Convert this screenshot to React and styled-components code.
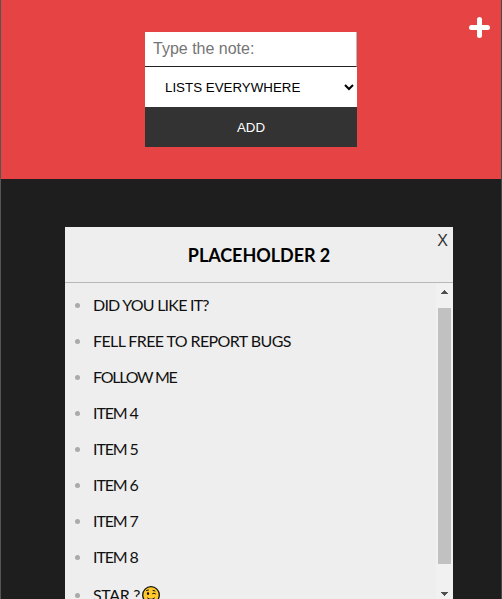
import React from "react";
import styled, { createGlobalStyle } from "styled-components";

const GlobalStyle = createGlobalStyle`
  *, *::before, *::after { box-sizing: border-box; }
  html, body { margin: 0; padding: 0; overflow: hidden; background: #1e1e1e; }
`;

const Page = styled.div`
  width: 502px;
  height: 599px;
  overflow: hidden;
  background: #1e1e1e;
  border-left: 1px solid #555555;
  border-right: 1px solid #484848;
  font-family: "Liberation Sans", Arial, sans-serif;
`;

const Header = styled.header`
  position: relative;
  display: flex;
  justify-content: center;
  height: 179px;
  padding-top: 32px;
  background: #e64444;
`;

const AddListButton = styled.button`
  position: absolute;
  top: 17px;
  right: 11px;
  width: 21px;
  height: 21px;
  padding: 0;
  border: 0;
  background: none;

  svg { display: block; }
`;

const NoteForm = styled.form`
  display: flex;
  flex-direction: column;
  width: 212px;
  height: 115px;
`;

const NoteInput = styled.input`
  height: 35px;
  padding: 0 8px;
  border: 0;
  border-right: 1px solid #b8b8b8;
  border-bottom: 1px solid #222;
  border-radius: 0;
  outline: 0;
  background: #fff;
  font: 16px "Liberation Sans", Arial, sans-serif;

  &::placeholder { color: #757575; opacity: 1; }
`;

const ListSelect = styled.select`
  height: 40px;
  padding: 0 1px 0 16px;
  border: 0;
  border-radius: 0;
  outline: 0;
  background: #fff;
  color: #000;
  font: 13.333px "Liberation Sans", Arial, sans-serif;
`;

const SubmitButton = styled.button`
  height: 40px;
  padding: 0;
  border: 0;
  background: #333;
  color: #fff;
  font: 13.333px "Liberation Sans", Arial, sans-serif;
`;

const Card = styled.section`
  width: 388px;
  margin: 48px 0 0 64px;
  background: #eee;
`;

const CardHeader = styled.div`
  position: relative;
  height: 56px;
  border-bottom: 1px solid #b5b8b6;
`;

const CardTitle = styled.h2`
  margin: 0;
  color: #000;
  font: 700 18px/56px Lato, sans-serif;
  letter-spacing: -0.05px;
  text-align: center;
`;

const CloseButton = styled.button`
  position: absolute;
  top: 4px;
  right: 5px;
  padding: 0;
  border: 0;
  background: none;
  color: #333;
  font: 16px/20px "Liberation Sans", Arial, sans-serif;
`;

const CardBody = styled.div`
  display: flex;
  height: 316px;
`;

const Items = styled.ul`
  flex: 1;
  margin: 0;
  padding: 4px 0 0 10px;
  list-style: none;
  overflow: hidden;
`;

const Item = styled.li`
  display: flex;
  align-items: center;
  height: ${(p) => (p.$tall ? 40 : 36)}px;
  color: #111;
  font: 400 16px/36px Lato, sans-serif;
  letter-spacing: ${(p) => p.$tracking}px;
  white-space: pre;

  &::before {
    content: "";
    flex: none;
    width: 5px;
    height: 5px;
    margin-right: 13px;
    border-radius: 50%;
    background: #aaa;
  }

  svg { display: block; margin-left: 2px; }
`;

const Scrollbar = styled.div`
  display: flex;
  flex-direction: column;
  align-items: center;
  width: 17px;
  padding: 7px 0 3px;
  background: #f1f1f1;

  svg { display: block; }
`;

const Thumb = styled.div`
  width: 13px;
  height: 256px;
  margin: 14px 0 28px;
  background: #c1c1c1;
`;

const Arrow = ({ down }) => (
  <svg width="7" height="4" viewBox="0 0 7 4" fill="#505050" shapeRendering="crispEdges">
    <path d={down ? "M0 0H7V1H6V2H5V3H4V4H3V3H2V2H1V1H0Z" : "M3 0H4V1H5V2H6V3H7V4H0V3H1V2H2V1H3Z"} />
  </svg>
);

const WinkFace = () => (
  <svg width="18" height="18" viewBox="0 0 18 18">
    <circle cx="9" cy="9" r="8.3" fill="#ffc82c" stroke="#111" strokeWidth="1.3" />
    <ellipse cx="6" cy="7.5" rx="1.1" ry="1.5" fill="#111" />
    <path d="M10.5 7.6Q12 6.4 13.5 7.8M5.5 12Q9 15 12.5 12M4.5 4.5L6.5 4M11 4.5L13 5" fill="none" stroke="#111" strokeLinecap="round" />
  </svg>
);

const notes = [
  { text: "DID YOU LIKE IT?", tracking: -0.77 },
  { text: "FELL FREE TO REPORT BUGS", tracking: -0.6 },
  { text: "FOLLOW ME", tracking: -1.25 },
  { text: "ITEM 4", tracking: -1.1 },
  { text: "ITEM 5", tracking: -1.1 },
  { text: "ITEM 6", tracking: -1.1 },
  { text: "ITEM 7", tracking: -1.1 },
  { text: "ITEM 8", tracking: -1.1 },
  { text: "STAR ?", tracking: -0.35, wink: true },
];

export default function App() {
  return (
    <Page>
      <GlobalStyle />
      <Header>
        <NoteForm>
          <NoteInput placeholder="Type the note:" />
          <ListSelect><option>LISTS EVERYWHERE</option></ListSelect>
          <SubmitButton type="button">ADD</SubmitButton>
        </NoteForm>
        <AddListButton aria-label="Add list">
          <svg width="21" height="21" viewBox="0 0 21 21">
            <path d="M10.5 2.5V18.5M2.5 10.5H18.5" stroke="#fff" strokeWidth="5" strokeLinecap="round" />
          </svg>
        </AddListButton>
      </Header>
      <Card>
        <CardHeader>
          <CardTitle>PLACEHOLDER 2</CardTitle>
          <CloseButton>X</CloseButton>
        </CardHeader>
        <CardBody>
          <Items>
            {notes.map((n) => (
              <Item key={n.text} $tracking={n.tracking} $tall={n.wink}>
                <span>{n.text}</span>
                {n.wink && <WinkFace />}
              </Item>
            ))}
          </Items>
          <Scrollbar>
            <Arrow />
            <Thumb />
            <Arrow down />
          </Scrollbar>
        </CardBody>
      </Card>
    </Page>
  );
}
